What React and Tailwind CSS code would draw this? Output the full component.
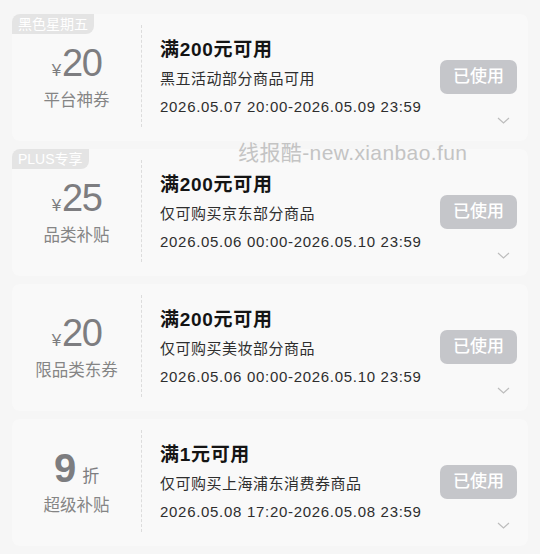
const coupons = [
  {
    badge: "黑色星期五",
    amount: "20",
    unit: "yen",
    label: "平台神券",
    title: "满200元可用",
    desc: "黑五活动部分商品可用",
    date: "2026.05.07 20:00-2026.05.09 23:59",
  },
  {
    badge: "PLUS专享",
    amount: "25",
    unit: "yen",
    label: "品类补贴",
    title: "满200元可用",
    desc: "仅可购买京东部分商品",
    date: "2026.05.06 00:00-2026.05.10 23:59",
  },
  {
    amount: "20",
    unit: "yen",
    label: "限品类东券",
    title: "满200元可用",
    desc: "仅可购买美妆部分商品",
    date: "2026.05.06 00:00-2026.05.10 23:59",
  },
  {
    amount: "9",
    unit: "zhe",
    label: "超级补贴",
    title: "满1元可用",
    desc: "仅可购买上海浦东消费券商品",
    date: "2026.05.08 17:20-2026.05.08 23:59",
  },
];

const cjk = "font-['Liberation_Sans','Noto_Sans_CJK_SC',sans-serif]";

const Chevron = () => (
  <svg width="13" height="7" viewBox="0 0 13 7" fill="none">
    <polyline points="1,1 6.5,6 12,1" stroke="#bdbdbd" strokeWidth="1.2" />
  </svg>
);

const Coupon = ({ c }) => (
  <div className="relative flex h-[127px] rounded-[8px] bg-[#f9f9f9]">
    {c.badge && (
      <div className="absolute left-0 top-0 flex h-[20px] items-center rounded-tl-[8px] rounded-br-[8px] bg-[#e4e4e4] px-[6px] text-[14px] text-white">
        {c.badge}
      </div>
    )}

    <div className="flex w-[129px] flex-col items-center pt-[29px]">
      {c.unit === "yen" ? (
        <div className="flex h-[40px] items-baseline text-[#7d7d80]">
          <span className="mr-[1px] text-[17px]">¥</span>
          <span className="text-[38px] leading-[40px] tracking-[-1.5px]">{c.amount}</span>
        </div>
      ) : (
        <div className="flex h-[40px] items-baseline text-[#7d7d80]">
          <span className="text-[40px] font-bold leading-[40px]">{c.amount}</span>
          <span className="ml-[6px] text-[17px]">折</span>
        </div>
      )}
      <div className="mt-[6px] text-[16.5px] leading-[22px] text-[#858585]">{c.label}</div>
    </div>

    <div className="mb-[14px] mt-[11px] w-0 border-l border-dashed border-[#dcdcdc]" />

    <div className="flex flex-1 pl-[18px]">
      <div className="flex-1 pt-[23px]">
        <div className="text-[19px] font-semibold leading-[26px] tracking-[0.7px] text-[#141414]">
          {c.title}
        </div>
        <div className="mt-[5px] text-[15px] leading-[22px] tracking-[0.5px] text-[#2e2e2e]">
          {c.desc}
        </div>
        <div className="mt-[7px] text-[15px] leading-[20px] tracking-[0.7px] text-[#2e2e2e]">
          {c.date}
        </div>
      </div>
      <div className="mr-[11px] flex w-[77px] flex-col pt-[46px]">
        <div className="flex h-[34px] items-center justify-center rounded-[7px] bg-[#c5c6ca] text-[17px] font-medium text-white">
          已使用
        </div>
        <div className="mr-[7px] mt-[23px] self-end">
          <Chevron />
        </div>
      </div>
    </div>
  </div>
);

export default function App() {
  return (
    <div className={`relative h-[554px] w-[540px] overflow-hidden bg-[#f6f6f6] px-[12px] pt-[14px] ${cjk}`}>
      <div className="flex flex-col gap-[8px]">
        {coupons.map((c, i) => (
          <Coupon key={i} c={c} />
        ))}
      </div>
      <div className="absolute left-[238px] top-[141px] text-[21px] leading-[24px] tracking-[0.4px] text-[#c4c4c4]">
        线报酷-new.xianbao.fun
      </div>
    </div>
  );
}
